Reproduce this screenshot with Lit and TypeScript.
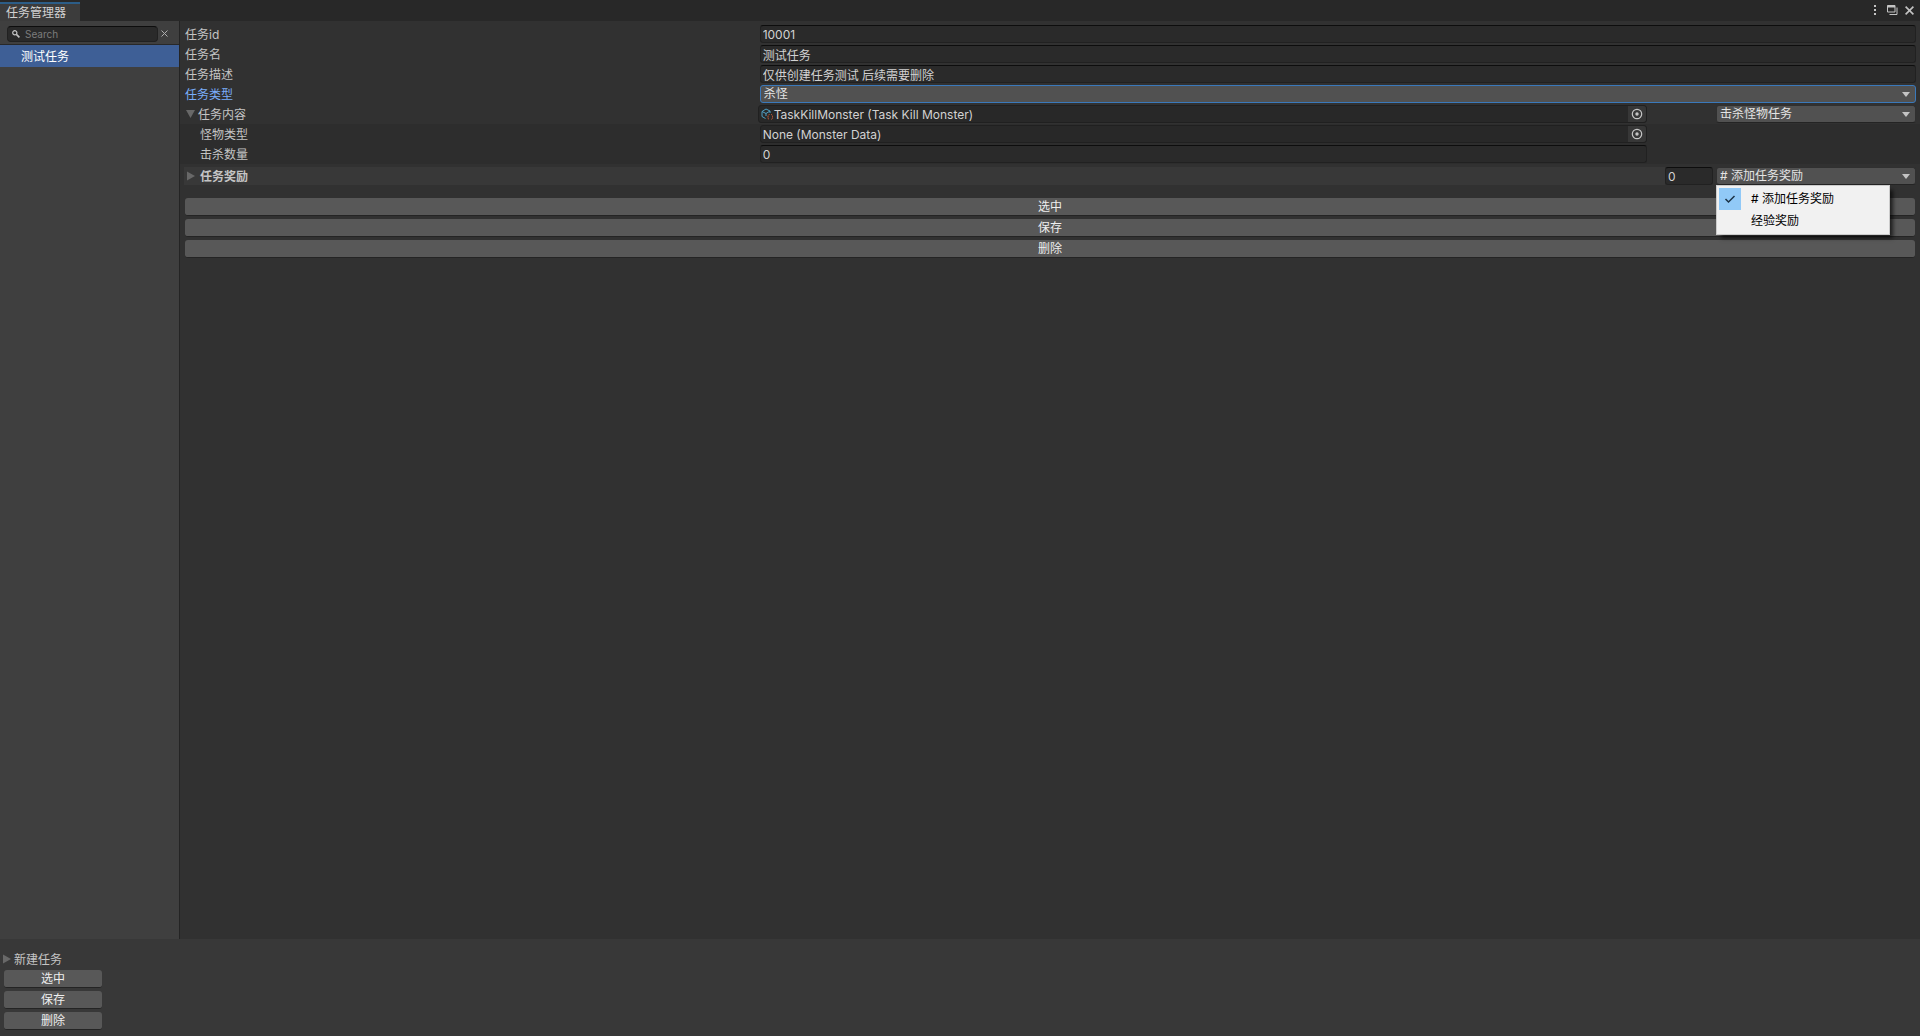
import { LitElement, html, css, svg } from "lit";
import { customElement, property, state } from "lit/decorators.js";

const shared = css`
  * { box-sizing: border-box; }
  button, input, select {
    font: inherit;
    color: inherit;
    margin: 0;
    padding: 0;
    border: 0;
    background: none;
    outline: none;
    appearance: none;
    border-radius: 0;
  }
  svg { display: block; flex: none; }
`;

const triangle = (open: boolean) => html`
  <svg width="9" height="10" viewBox="0 0 9 10" fill="#686868">
    ${open ? svg`<path d="M0 1H9L4.5 9Z" />` : svg`<path d="M0 0.5V9.5L8 5Z" />`}
  </svg>`;

const picker = html`
  <svg width="12" height="12" viewBox="0 0 12 12">
    <circle cx="6" cy="6" r="4.7" fill="none" stroke="#c4c4c4" stroke-width="1.2" />
    <circle cx="6" cy="6" r="1.7" fill="#c4c4c4" />
  </svg>`;

@customElement("editor-button")
class EditorButton extends LitElement {
  @property() label = "";
  static styles = [shared, css`
    :host { display: block; }
    .button {
      display: block;
      width: 100%;
      height: 18px;
      padding-top: 1px;
      line-height: 16px;
      text-align: center;
      color: #eee;
      background: #585858;
      border-bottom: 1px solid #242424;
      border-radius: 3px;
    }
  `];
  render() {
    return html`<button class="button">${this.label}</button>`;
  }
}

@customElement("editor-select")
class EditorSelect extends LitElement {
  @property() label = "";
  @property({ type: Array }) options: string[] = [];
  @property({ type: Boolean }) active = false;
  static styles = [shared, css`
    :host { display: block; min-width: 0; }
    .box {
      display: grid;
      align-items: center;
      height: 18px;
      background: #515151;
      border: 1px solid #303030;
      border-bottom-color: #242424;
      border-radius: 3px;
      color: #e4e4e4;
    }
    .active { border-color: #3a79bb; }
    .select {
      grid-area: 1 / 1;
      width: 100%;
      height: 16px;
      line-height: 16px;
      padding: 0 20px 0 3px;
    }
    .arrow { grid-area: 1 / 1; justify-self: end; margin-right: 5px; pointer-events: none; }
  `];
  render() {
    return html`
      <div class="box ${this.active ? "active" : ""}">
        <select class="select" aria-label=${this.label}>
          ${this.options.map((o) => html`<option>${o}</option>`)}
        </select>
        <svg class="arrow" width="8" height="5" viewBox="0 0 8 5" fill="#c4c4c4"><path d="M0 0H8L4 5Z" /></svg>
      </div>`;
  }
}

@customElement("app-root")
class AppRoot extends LitElement {
  @state() private query = "";

  static styles = [shared, css`
    :host {
      display: flex;
      flex-direction: column;
      min-height: 100vh;
      background: #383838;
      color: #c4c4c4;
      font: 12px/16px Inter, "Noto Sans CJK SC", sans-serif;
    }
    .titlebar {
      display: flex;
      justify-content: space-between;
      height: 21px;
      padding-top: 2px;
      background: #282828;
    }
    .tab {
      height: 19px;
      width: 80px;
      padding: 2px 0 0 6px;
      line-height: 17px;
      text-align: left;
      background: #3c3c3c;
      box-shadow: inset 0 2px #2c5d87;
      color: #d2d2d2;
    }
    .tools { display: flex; align-items: center; gap: 7px; height: 16px; padding-right: 6px; }
    .tools button { display: block; }
    .body { display: flex; flex: 1; }
    .side {
      flex: none;
      width: 180px;
      background: #3f3f3f;
      border-right: 1px solid #242424;
    }
    .search {
      display: flex;
      align-items: center;
      gap: 3px;
      height: 24px;
      padding: 2px 11px 0 7px;
      border-bottom: 1px solid #282828;
    }
    .search-box {
      display: flex;
      align-items: center;
      gap: 5px;
      flex: 1;
      min-width: 0;
      height: 16px;
      padding-left: 4px;
      background: #2a2a2a;
      border: 1px solid #212121;
      border-top-color: #0d0d0d;
      border-radius: 4px;
      font-size: 10px;
    }
    .search-box input { flex: 1; min-width: 0; height: 14px; padding-top: 1px; }
    .search-box input::placeholder { color: #7c7c7c; opacity: 1; }
    .item {
      display: block;
      width: 100%;
      height: 22px;
      padding: 2px 0 0 21px;
      line-height: 20px;
      text-align: left;
      color: #fff;
      background: #3e5f96;
    }
    .main { flex: 1; min-width: 0; background: #313131; padding-top: 3px; }
    .row {
      display: grid;
      grid-template-columns: 575fr 1157fr;
      align-items: center;
      height: 20px;
      padding: 0 4px 0 5px;
    }
    .row.nested { background: #2d2d2d; }
    .row.reward {
      grid-template-columns: 1fr 48px 200px;
      column-gap: 3px;
      padding: 0 4px;
      margin-top: 2px;
    }
    .row.reward .fold { background: #383838; height: 18px; margin-right: -3px; padding-left: 3px; gap: 4px; }
    .split { display: grid; grid-template-columns: 1fr 200px; column-gap: 69px; }
    .split.asset { margin-left: -2px; }
    .label { padding-top: 2px; color: #c4c4c4; }
    .label.active { color: #7baefa; }
    .label.indent { padding-left: 15px; }
    .fold { display: flex; align-items: center; gap: 3px; padding-left: 1px; text-align: left; }
    .fold span { padding-top: 2px; }
    .strong { font-weight: 700; }
    .field {
      width: 100%;
      height: 18px;
      padding: 0 2px;
      line-height: 16px;
      background: #2a2a2a;
      border: 1px solid #212121;
      border-top-color: #0d0d0d;
      border-radius: 3px;
      color: #d2d2d2;
    }
    .object {
      display: flex;
      align-items: center;
      height: 18px;
      padding-left: 2px;
      background: #282828;
      border: 1px solid #202020;
      border-radius: 3px;
      color: #d2d2d2;
    }
    .object .name { flex: 1; padding: 2px 0 0 1px; }
    .object.bare { padding-left: 1px; }
    .pick { display: grid; place-items: center; width: 18px; height: 16px; background: #373737; border-radius: 0 3px 3px 0; }
    .actions { display: grid; gap: 3px; padding: 12px 5px 0; }
    .reward-select { position: relative; }
    .menu {
      position: absolute;
      z-index: 1;
      top: 18px;
      left: 0;
      width: 174px;
      padding: 2px;
      background: #f1f1f1;
      border: 1px solid #ccc;
      box-shadow: 4px 4px 4px -1px #000a;
      color: #000;
    }
    .menu button {
      display: grid;
      grid-template-columns: 22px 1fr;
      column-gap: 10px;
      align-items: center;
      width: 100%;
      height: 22px;
      text-align: left;
    }
    .check { display: grid; place-items: center; height: 22px; }
    .check.on { background: #91c9f7; }
    .create { height: 97px; padding: 12px 3px 0; }
    .create .fold { gap: 2px; height: 16px; padding-left: 0; }
    .create .actions { width: 100px; padding: 3px 1px 0; }
  `];

  private textRow(id: string, label: string, value: string) {
    return html`
      <div class="row">
        <label class="label" for=${id}>${label}</label>
        <input class="field" id=${id} .value=${value} />
      </div>`;
  }

  private actions() {
    return html`
      <div class="actions">
        ${["选中", "保存", "删除"].map((t) => html`<editor-button label=${t}></editor-button>`)}
      </div>`;
  }

  render() {
    return html`
      <header class="titlebar">
        <button class="tab">任务管理器</button>
        <div class="tools">
          <button aria-label="菜单">
            <svg width="10" height="12" viewBox="0 0 10 12" fill="#c4c4c4"><path d="M4 1h2v2H4zM4 5h2v2H4zM4 9h2v2H4z" /></svg>
          </button>
          <button aria-label="最大化">
            <svg width="11" height="10" viewBox="0 0 11 10" fill="none" stroke="#c4c4c4"><path d="M.5 .5h7.500v6.500h-7.500z" /><path d="M.5 1.500h7.500" stroke-width="2" /><path d="M10 2.500v7H2.500" /></svg>
          </button>
          <button aria-label="关闭">
            <svg width="9" height="9" viewBox="0 0 9 9" stroke="#c4c4c4" stroke-width="1.600"><path d="M.6 .6l7.800 7.800M8.400 .6L.6 8.400" /></svg>
          </button>
        </div>
      </header>
      <div class="body">
        <nav class="side">
          <div class="search">
            <div class="search-box">
              <svg width="8" height="8" viewBox="0 0 8 8" fill="none" stroke="#c4c4c4" stroke-width="1.200"><circle cx="2.800" cy="2.800" r="2.100" /><path d="M4.400 4.400l3 3" stroke-width="1.600" /></svg>
              <input aria-label="Search" placeholder="Search" .value=${this.query}
                @input=${(e: Event) => (this.query = (e.target as HTMLInputElement).value)} />
            </div>
            <button aria-label="清除" @click=${() => (this.query = "")}>
              <svg width="7" height="7" viewBox="0 0 7 7" stroke="#b0b0b0"><path d="M.5 .5l6 6M6.500 .5l-6 6" /></svg>
            </button>
          </div>
          <button class="item">测试任务</button>
        </nav>
        <main class="main">
          ${this.textRow("task-id", "任务id", "10001")}
          ${this.textRow("task-name", "任务名", "测试任务")}
          ${this.textRow("task-desc", "任务描述", "仅供创建任务测试 后续需要删除")}
          <div class="row">
            <span class="label active">任务类型</span>
            <editor-select active label="任务类型" .options=${["杀怪"]}></editor-select>
          </div>
          <div class="row">
            <button class="fold">${triangle(true)}<span>任务内容</span></button>
            <div class="split asset">
              <div class="object">
                <svg width="12" height="12" viewBox="0 0 12 12" fill="none" stroke="#4f9fc4"><path d="M4.500 10.500L1 8.500V3.500L5 1L9 3V5M1 3.500L5 5.500L9 3M5 5.500V8" /><path d="M8.500 6.500Q7 6.500 7 9T8.500 11.500M10 6.500Q11.500 6.500 11.500 9T10 11.500" stroke="#d65f3a" stroke-dasharray="1.500 .7" /></svg>
                <span class="name">TaskKillMonster (Task Kill Monster)</span>
                <button class="pick" aria-label="选择">${picker}</button>
              </div>
              <editor-select label="任务内容" .options=${["击杀怪物任务"]}></editor-select>
            </div>
          </div>
          <div class="row nested">
            <span class="label indent">怪物类型</span>
            <div class="split">
              <div class="object bare">
                <span class="name">None (Monster Data)</span>
                <button class="pick" aria-label="选择">${picker}</button>
              </div>
            </div>
          </div>
          <div class="row nested">
            <label class="label indent" for="kill-count">击杀数量</label>
            <div class="split"><input class="field" id="kill-count" .value=${"0"} /></div>
          </div>
          <div class="row reward">
            <button class="fold">${triangle(false)}<span class="strong">任务奖励</span></button>
            <input class="field" aria-label="任务奖励" .value=${"0"} />
            <div class="reward-select">
              <editor-select label="添加任务奖励" .options=${["# 添加任务奖励", "经验奖励"]}></editor-select>
              <div class="menu" role="menu">
                <button role="menuitem">
                  <span class="check on">
                    <svg width="12" height="9" viewBox="0 0 12 9" fill="none" stroke="#1c3346" stroke-width="1.500"><path d="M1.500 4L4.500 7L10.500 1" /></svg>
                  </span>
                  <span># 添加任务奖励</span>
                </button>
                <button role="menuitem"><span class="check"></span><span>经验奖励</span></button>
              </div>
            </div>
          </div>
          ${this.actions()}
        </main>
      </div>
      <footer class="create">
        <button class="fold">${triangle(false)}<span>新建任务</span></button>
        ${this.actions()}
      </footer>`;
  }
}
